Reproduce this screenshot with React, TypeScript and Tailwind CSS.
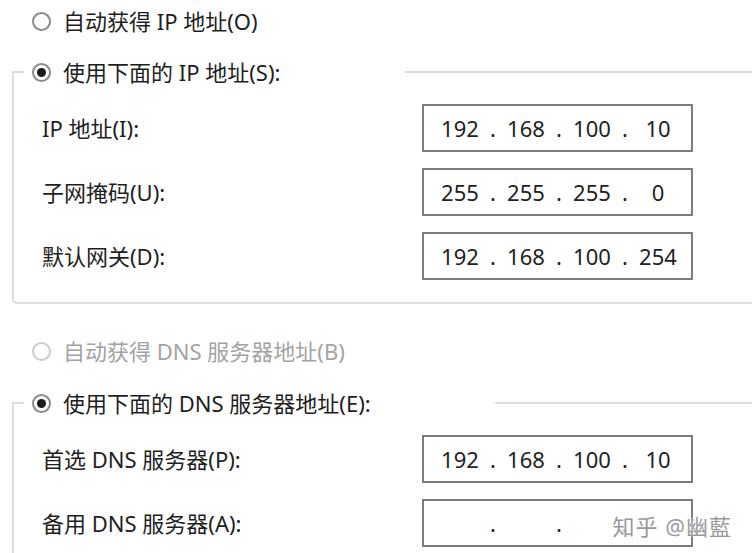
import React from "react";

type Field = { label: string; value: string[] };

const ipFields: Field[] = [
  { label: "IP 地址(I):", value: ["192", "168", "100", "10"] },
  { label: "子网掩码(U):", value: ["255", "255", "255", "0"] },
  { label: "默认网关(D):", value: ["192", "168", "100", "254"] },
];

const dnsFields: Field[] = [
  { label: "首选 DNS 服务器(P):", value: ["192", "168", "100", "10"] },
  { label: "备用 DNS 服务器(A):", value: ["", "", "", ""] },
];

function Radio({ checked, disabled }: { checked?: boolean; disabled?: boolean }) {
  return (
    <span
      className={`flex h-[19px] w-[19px] shrink-0 items-center justify-center rounded-full border-2 bg-white ${
        disabled ? "border-[#cdcdcd]" : "border-[#8a8a8a]"
      }`}
    >
      {checked && <span className="h-[9px] w-[9px] rounded-full bg-[#1b1b1b]" />}
    </span>
  );
}

function RadioRow({ text, checked, disabled }: { text: string; checked?: boolean; disabled?: boolean }) {
  return (
    <div className="flex h-[42px] items-center gap-[12px] pl-[32px]">
      <Radio checked={checked} disabled={disabled} />
      <span className={disabled ? "text-[#a3a3a3]" : "text-[#1e1e1e]"}>{text}</span>
    </div>
  );
}

// four-octet address box, segments centred with dots between them
function IpBox({ parts }: { parts: string[] }) {
  return (
    <div className="flex h-[48px] w-[271px] items-center border-2 border-[#7d7d7d] bg-white pl-[10px] text-[22px] text-[#222]">
      {parts.map((p, i) => (
        <React.Fragment key={i}>
          {i > 0 && <span className="w-[14px] text-center">.</span>}
          <span className="w-[52px] text-center">{p}</span>
        </React.Fragment>
      ))}
    </div>
  );
}

function Group({
  legend,
  legendWidth,
  fields,
  className,
}: {
  legend: string;
  legendWidth: string;
  fields: Field[];
  className: string;
}) {
  return (
    <fieldset className={`ml-[12px] rounded-bl-[5px] border-2 border-r-0 border-[#dddddd] pl-[10px] ${className}`}>
      <legend className={`h-[30px] ${legendWidth}`}>
        <div className="flex h-full items-center gap-[12px] pl-[8px]">
          <Radio checked />
          <span className="text-[#1e1e1e]">{legend}</span>
        </div>
      </legend>
      <div className="flex flex-col gap-4 pl-[18px] pt-[17px] pb-[22px]">
        {fields.map((f) => (
          <div key={f.label} className="flex h-[48px] items-center">
            <span className="w-[380px] text-[#1e1e1e]">{f.label}</span>
            <IpBox parts={f.value} />
          </div>
        ))}
      </div>
    </fieldset>
  );
}

export default function App() {
  return (
    <div className="relative h-[553px] w-[752px] overflow-hidden bg-white font-['Noto_Sans','Noto_Sans_CJK_SC',sans-serif] text-[22px] leading-none">
      <RadioRow text="自动获得 IP 地址(O)" />
      <Group
        legend="使用下面的 IP 地址(S):"
        legendWidth="w-[381px]"
        fields={ipFields}
        className="mt-[15px]"
      />
      <div className="mt-[26px]">
        <RadioRow text="自动获得 DNS 服务器地址(B)" disabled />
      </div>
      <Group
        legend="使用下面的 DNS 服务器地址(E):"
        legendWidth="w-[471px]"
        fields={dnsFields}
        className="mt-[16px]"
      />

      {/* site watermark */}
      <div className="absolute right-[20px] bottom-[16px] text-[22px] tracking-[1px] text-[#9a9a9a] [text-shadow:0_0_1px_#fff,0_0_2px_#fff]">
        知乎 @幽藍
      </div>
    </div>
  );
}
